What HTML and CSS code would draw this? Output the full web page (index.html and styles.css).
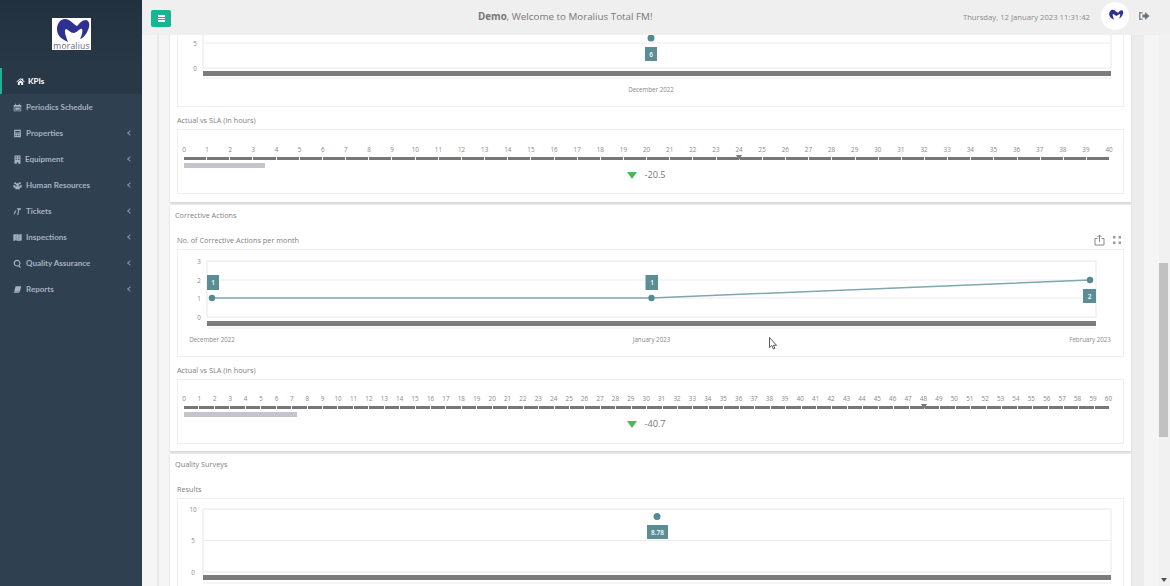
FILE: index.html
```html
<!DOCTYPE html>
<html lang="en">
<head>
    <meta charset="UTF-8">
    <title>Moralius Total FM</title>
    <link rel="stylesheet" href="styles.css">
</head>
<body>
    <nav class="sidebar">
        <div class="logo-area">
            <div class="logo">
                <svg viewBox="0 0 39 24" width="39" height="24"><path fill="#2e3192" d="M5 11C5 5 9 1 13 1C18 1 21 6 25 8C28 5 30 2 34 2C38 3 38 8 36 12C34 17 31 20 28 21C30 17 31 13 30 11C28 10 26 14 22 15C18 15 16 11 14 11C12 12 13 16 16 24C9 21 5 17 5 11Z"/></svg>
                <span>moralius</span>
            </div>
        </div>
        <a class="nav-item active"><svg class="nav-icon" viewBox="0 0 12 12"><path d="M6 1.500L.5 6.300l.7.700L6 3l4.800 4 .7-.7L9.500 4.300V2H8v1zM2.500 7.200V10.500H5V8h2v2.500h2.500V7.200L6 4.200z"/></svg><span class="nav-text">KPIs</span></a>
        <a class="nav-item"><svg class="nav-icon" viewBox="0 0 12 12"><path d="M1 2.500h2V1h1.200v1.500h3.600V1H9v1.500h2V11H1zM2 5v5h8V5z"/><path d="M3 6h6v3H3z"/></svg><span class="nav-text">Periodics Schedule</span></a>
        <a class="nav-item"><svg class="nav-icon" viewBox="0 0 12 12"><path d="M1.500 1h9v10h-9zM3 2.500v2h6v-2zM3 6v1h1.500V6zM5.300 6v1h1.500V6zM7.500 6v1H9V6zM3 8v1h1.500V8zM5.300 8v1h1.500V8zM7.500 8v1H9V8z"/></svg><span class="nav-text">Properties</span></a>
        <a class="nav-item tight"><svg class="nav-icon" viewBox="0 0 12 12"><path d="M2 .5h8v11H7V9.500H5v2H2zM3.500 2v1.500H5V2zM7 2v1.500h1.500V2zM3.500 5v1.500H5V5zM7 5v1.500h1.500V5z"/></svg><span class="nav-text">Equipment</span></a>
        <a class="nav-item"><svg class="nav-icon" viewBox="0 0 12 12"><circle cx="3" cy="3" r="1.500"/><circle cx="9" cy="3" r="1.500"/><circle cx="6" cy="4.500" r="2"/><path d="M0 5.500h3L3.500 9H1zM12 5.500H9L8.500 9H11zM3.500 7h5l.5 4H3z"/></svg><span class="nav-text">Human Resources</span></a>
        <a class="nav-item"><svg class="nav-icon" viewBox="0 0 12 12"><path d="M5 1.500h6l-.8 2H8.500L7 10.500H5.500L7 3.500H6zM3.500 4h1L3.500 8h-1zM1.500 6h1L2 10H1z"/></svg><span class="nav-text">Tickets</span></a>
        <a class="nav-item"><svg class="nav-icon" viewBox="0 0 12 12"><path d="M.5 2l3.300-.8v8.600L.5 10.500zM4.300 1.200L7.700 2v8.800l-3.400-.9zM8.200 2l3.300-.8v8.800l-3.300.8z"/></svg><span class="nav-text">Inspections</span></a>
        <a class="nav-item"><svg class="nav-icon" viewBox="0 0 12 12"><path fill-rule="evenodd" d="M5.500 1a4.500 4.500 0 0 1 3 7.800l2 2.200-1.200.9-2.100-2.300A4.500 4.500 0 1 1 5.500 1zm0 1.500a3 3 0 1 0 0 6 3 3 0 0 0 0-6z"/></svg><span class="nav-text">Quality Assurance</span></a>
        <a class="nav-item"><svg class="nav-icon" viewBox="0 0 12 12"><path d="M3.500 1.500H11L9 9H1.500zM1 9.500h7.500l-.3 1.200H1.200z"/></svg><span class="nav-text">Reports</span></a>
    </nav>

    <div class="main">
        <header class="topbar">
            <button class="menu-btn"><span></span><span></span><span></span></button>
            <div class="welcome"><b>Demo</b>, Welcome to Moralius Total FM!</div>
            <div class="clock">Thursday, 12 January 2023 11:31:42</div>
            <div class="avatar">
                <svg viewBox="0 0 39 24" width="17" height="11"><path fill="#2e3192" d="M5 11C5 5 9 1 13 1C18 1 21 6 25 8C28 5 30 2 34 2C38 3 38 8 36 12C34 17 31 20 28 21C30 17 31 13 30 11C28 10 26 14 22 15C18 15 16 11 14 11C12 12 13 16 16 24C9 21 5 17 5 11Z"/></svg>
            </div>
            <svg class="logout" viewBox="0 0 12 12" width="12" height="12"><path d="M1 2h3.500v1.500H2.500v5h2V10H1z" fill="#8b8f94"/><path d="M4.500 4.500H7V2l4.500 4L7 10V7.500H4.500z" fill="#6d7378"/></svg>
        </header>

        <div class="content">
            <div class="inner">
                <div class="panels">
                    <section class="panel first">
                        <div class="chart-box">
                            <svg class="chart" viewBox="0 0 945 99" height="99">
                                <rect class="plot" x="25" y="11" width="908" height="50"/>
                                <line class="grid" x1="25" y1="36" x2="933" y2="36"/>
                                <text class="axis" x="17" y="38.500" text-anchor="middle">5</text>
                                <text class="axis" x="17" y="63.500" text-anchor="middle">0</text>
                                <rect class="scale-bar" x="25" y="64" width="908" height="5"/>
                                <line class="grid" x1="25" y1="71" x2="933" y2="71"/>
                                <text class="axis" x="473" y="85" text-anchor="middle">December 2022</text>
                                <circle class="point" cx="473" cy="31" r="3.500"/>
                                <rect class="tag" x="467" y="40" width="12" height="14"/>
                                <text class="tag-text" x="473" y="49.500" text-anchor="middle">6</text>
                            </svg>
                        </div>
                        <div class="chart-label">Actual vs SLA (in hours)</div>
                        <div class="chart-box ruler" data-max="40" data-mark="24" data-bar="3.5" data-value="-20.5"></div>
                    </section>

                    <section class="panel">
                        <div class="panel-title">Corrective Actions</div>
                        <div class="chart-label with-tools">
                            <span>No. of Corrective Actions per month</span>
                            <div class="tools">
                                <svg viewBox="0 0 11 12" width="11" height="12"><path fill="none" stroke="#888" d="M3.500 4.500H1V11h9V4.500H7.500M5.500 8V1M3.500 3l2-2 2 2"/></svg>
                                <svg viewBox="0 0 10 10" width="10" height="10"><path fill="#999" d="M1 1h2.500v2.500H1zM6.500 1H9v2.500H6.500zM1 6.500h2.500V9H1zM6.500 6.500H9V9H6.500z"/></svg>
                            </div>
                        </div>
                        <div class="chart-box">
                            <svg class="chart" viewBox="0 0 945 106" height="106">
                                <rect class="plot" x="29" y="11" width="889" height="56"/>
                                <line class="grid" x1="29" y1="30" x2="918" y2="30"/>
                                <line class="grid" x1="29" y1="48" x2="918" y2="48"/>
                                <text class="axis" x="21" y="13.500" text-anchor="middle">3</text>
                                <text class="axis" x="21" y="32.500" text-anchor="middle">2</text>
                                <text class="axis" x="21" y="50.500" text-anchor="middle">1</text>
                                <text class="axis" x="21" y="69.500" text-anchor="middle">0</text>
                                <rect class="scale-bar" x="29" y="71" width="889" height="5"/>
                                <line class="grid" x1="29" y1="78" x2="918" y2="78"/>
                                <text class="axis" x="34" y="92" text-anchor="middle">December 2022</text>
                                <text class="axis" x="473.500" y="92" text-anchor="middle">January 2023</text>
                                <text class="axis" x="912" y="92" text-anchor="middle">February 2023</text>
                                <polyline class="line" points="34,48 473,48 912,30"/>
                                <circle class="point" cx="34" cy="48" r="3.200"/>
                                <circle class="point" cx="473.500" cy="48" r="3.200"/>
                                <circle class="point" cx="912" cy="30" r="3.200"/>
                                <rect class="tag" x="29" y="25" width="12" height="15"/>
                                <text class="tag-text" x="35" y="35" text-anchor="middle">1</text>
                                <rect class="tag" x="467.500" y="25" width="12.500" height="15"/>
                                <text class="tag-text" x="474" y="35" text-anchor="middle">1</text>
                                <rect class="tag" x="905" y="39" width="13" height="14"/>
                                <text class="tag-text" x="911.500" y="48.500" text-anchor="middle">2</text>
                            </svg>
                        </div>
                        <div class="chart-label">Actual vs SLA (in hours)</div>
                        <div class="chart-box ruler compact" data-max="60" data-mark="48" data-bar="7.33" data-value="-40.7"></div>
                    </section>

                    <section class="panel">
                        <div class="panel-title">Quality Surveys</div>
                        <div class="chart-label">Results</div>
                        <div class="chart-box">
                            <svg class="chart" viewBox="0 0 945 100" height="100">
                                <rect class="plot" x="25" y="10" width="908" height="63"/>
                                <line class="grid" x1="25" y1="41.500" x2="933" y2="41.500"/>
                                <text class="axis" x="15" y="12.500" text-anchor="middle">10</text>
                                <text class="axis" x="15" y="44" text-anchor="middle">5</text>
                                <text class="axis" x="15" y="75.500" text-anchor="middle">0</text>
                                <rect class="scale-bar" x="25" y="76" width="908" height="5"/>
                                <line class="grid" x1="25" y1="84" x2="933" y2="84"/>
                                <circle class="point" cx="479" cy="17.500" r="3.500"/>
                                <rect class="tag" x="469" y="26" width="21" height="14"/>
                                <text class="tag-text" x="479.500" y="35.500" text-anchor="middle">8.78</text>
                            </svg>
                        </div>
                    </section>
                </div>
            </div>
            <div class="scrollbar">
                <span class="arrow up"></span>
                <span class="thumb"></span>
                <span class="arrow down"></span>
            </div>
        </div>

        <svg class="cursor" viewBox="0 0 8 13" width="8" height="13"><path fill="#fff" stroke="#333" stroke-width=".8" d="M.5.500v10l2.300-2 1.500 3.500 1.600-.7L4.400 8.300H7.500z"/></svg>
    </div>

    <script src="script.js"></script>
</body>
</html>
```

FILE: styles.css
```css
* {
    box-sizing: border-box;
}
html, body {
    height: 100%;
}
body {
    margin: 0;
    display: flex;
    overflow: hidden;
    font-family: "Open Sans", sans-serif;
    color: #777;
    background-color: #f5f5f5;
}

/* sidebar */
.sidebar {
    width: 142px;
    flex-shrink: 0;
    background-color: #2f4050;
}
.logo-area {
    height: 68px;
    padding-top: 18px;
    background: linear-gradient(#22313f, #293846);
}
.logo {
    width: 39px;
    height: 32px;
    margin-left: 52px;
    background-color: #fff;
    overflow: hidden;
}
.logo svg {
    display: block;
}
.logo span {
    display: block;
    margin-top: -1px;
    font-size: 8.5px;
    line-height: 9px;
    letter-spacing: 0.2px;
    color: #6a6a7c;
    text-align: center;
}
.nav-item {
    display: flex;
    align-items: center;
    height: 26px;
    padding-left: 13px;
    padding-right: 9px;
    font-family: Lato, sans-serif;
    font-size: 8px;
    font-weight: 700;
    color: #a7b1c2;
    position: relative;
}
.nav-item::after {
    content: "";
    position: absolute;
    right: 10px;
    top: 11px;
    width: 3px;
    height: 3px;
    border-left: 1px solid #8695a8;
    border-bottom: 1px solid #8695a8;
    transform: rotate(45deg);
}
.nav-item:nth-of-type(1)::after, .nav-item:nth-of-type(2)::after {
    display: none;
}
.nav-item.tight .nav-text {
    margin-left: -1px;
}
.nav-icon {
    width: 9px;
    height: 9px;
    margin-right: 4px;
    flex-shrink: 0;
    fill: currentColor;
}
.nav-item.active {
    border-left: 2px solid #1ab394;
    padding-left: 14px;
    background-color: #293846;
    color: #fff;
}
.nav-item.active .nav-icon {
    margin-right: 3px;
}

/* top bar */
.main {
    flex: 1;
    min-width: 0;
    display: flex;
    flex-direction: column;
    position: relative;
}
.topbar {
    height: 35px;
    flex-shrink: 0;
    display: flex;
    align-items: center;
    padding-left: 9px;
    background-color: #efefef;
    position: relative;
    z-index: 1;
}
.menu-btn {
    width: 20px;
    height: 17px;
    margin-top: 2px;
    padding: 0;
    border: none;
    border-radius: 2px;
    background-color: #1ab394;
    display: flex;
    flex-direction: column;
    align-items: center;
    justify-content: center;
    gap: 1px;
}
.menu-btn span {
    width: 7px;
    height: 1.5px;
    background-color: #fff;
}
.welcome {
    margin-left: 307px;
    margin-top: -2px;
    font-size: 9.8px;
    color: #777;
}
.clock {
    margin-left: auto;
    font-size: 7.7px;
    margin-top: -2px;
    color: #8a8a8a;
}
.avatar {
    width: 28px;
    height: 28px;
    margin-left: 11px;
    margin-top: -3px;
    border-radius: 50%;
    background-color: #fff;
    display: flex;
    justify-content: center;
    padding-top: 7px;
}
.logout {
    margin-left: 9px;
    margin-right: 20px;
    margin-top: -3px;
}

/* page content */
.content {
    flex: 1;
    min-height: 0;
    display: flex;
    overflow: hidden;
    background-color: #f5f5f5;
}
.inner {
    width: 987px;
    margin-left: 15px;
    margin-right: 15px;
    flex-shrink: 0;
    border-left: 2px solid #e9e9e9;
    background-color: #ececec;
}
.panels {
    margin-top: -30px;
    padding-right: 13px;
    border-left: 11px solid #f5f5f5;
}
.panel {
    margin-bottom: 3px;
    padding: 5px 7px 7px;
    background-color: #fff;
    box-shadow: 0 1px 2px rgba(0, 0, 0, 0.12);
}
.panel.first {
    padding-top: 1px;
    padding-bottom: 8px;
}
.panel-title {
    margin-left: -2px;
    margin-bottom: 6px;
    font-size: 7.3px;
    line-height: 11px;
    color: #808080;
}
.chart-label {
    padding: 8px 0 3px;
    font-size: 7.3px;
    line-height: 11px;
    color: #808080;
}
.chart-label.with-tools {
    display: flex;
    justify-content: space-between;
}
.tools {
    display: flex;
    align-items: center;
    gap: 7px;
    margin-right: 2px;
    margin-top: -2px;
}
.chart-box {
    border: 1px solid #eee;
    background-color: #fff;
}
.chart {
    display: block;
    width: 945px;
}
.plot {
    fill: #fff;
    stroke: #e8e8e8;
}
.grid {
    stroke: #ececec;
}
.axis {
    font-size: 6.2px;
    fill: #888;
}
.scale-bar {
    fill: #7c7c7c;
}
.line {
    fill: none;
    stroke: #7fa7ad;
    stroke-width: 1.5;
}
.point {
    fill: #548b93;
}
.tag {
    fill: #5b8d94;
}
.tag-text {
    font-size: 6.5px;
    font-weight: 600;
    fill: #fff;
}

/* actual vs SLA ruler */
.ruler {
    height: 65px;
    padding: 15px 14px 0 6px;
    position: relative;
}
.ruler.compact {
    padding-top: 14px;
}
.ruler-ticks {
    display: flex;
    justify-content: space-between;
    font-size: 6.3px;
    line-height: 10px;
    color: #888;
}
.ruler-ticks span {
    width: 0;
    display: flex;
    justify-content: center;
}
.ruler-track {
    display: flex;
    gap: 1px;
    margin-top: 2px;
    position: relative;
}
.ruler-track span {
    flex: 1;
    height: 3px;
    background-color: #777;
}
.ruler-track .ruler-mark {
    position: absolute;
    top: -2px;
    flex: none;
    width: 0;
    height: 0;
    margin-left: -3px;
    background: none;
    border-left: 3px solid transparent;
    border-right: 3px solid transparent;
    border-top: 5px solid #6f7f85;
}
.ruler-bar {
    height: 5px;
    margin-top: 3px;
    background-color: #c5c3cc;
}
.ruler-value {
    display: flex;
    align-items: center;
    justify-content: center;
    gap: 7px;
    font-size: 9.2px;
    line-height: 14px;
    color: #777;
}
.ruler-value i {
    width: 0;
    height: 0;
    border-left: 5px solid transparent;
    border-right: 5px solid transparent;
    border-top: 7px solid #4cb75a;
}

/* scrollbar and mouse pointer */
.scrollbar {
    flex: 1;
    position: relative;
    background-color: #f1f1f1;
}
.thumb {
    position: absolute;
    left: 0;
    right: 2px;
    top: 228px;
    height: 174px;
    background-color: #c1c1c1;
}
.arrow {
    position: absolute;
    left: 2px;
    width: 0;
    height: 0;
    border-left: 3px solid transparent;
    border-right: 3px solid transparent;
}
.arrow.up {
    top: -32px;
    border-bottom: 4px solid #505050;
}
.arrow.down {
    bottom: 4px;
    border-top: 4px solid #505050;
}
.cursor {
    position: absolute;
    left: 627px;
    top: 337px;
}
```

FILE: script.js
```js
// builds the Actual vs SLA rulers from their data attributes
document.querySelectorAll('.ruler').forEach(function (ruler) {
    const max = parseInt(ruler.dataset.max);
    const mark = parseFloat(ruler.dataset.mark);
    const bar = parseFloat(ruler.dataset.bar);

    let ticks = '';
    let segments = '';
    for (let i = 0; i <= max; i++) {
        ticks += '<span>' + i + '</span>';
        if (i < max) {
            segments += '<span></span>';
        }
    }

    ruler.innerHTML =
        '<div class="ruler-ticks">' + ticks + '</div>' +
        '<div class="ruler-track">' + segments +
        '<span class="ruler-mark" style="left:' + (mark / max * 100) + '%"></span></div>' +
        '<div class="ruler-bar" style="width:' + (bar / max * 100) + '%"></div>' +
        '<div class="ruler-value"><i></i>' + ruler.dataset.value + '</div>';
});
```
